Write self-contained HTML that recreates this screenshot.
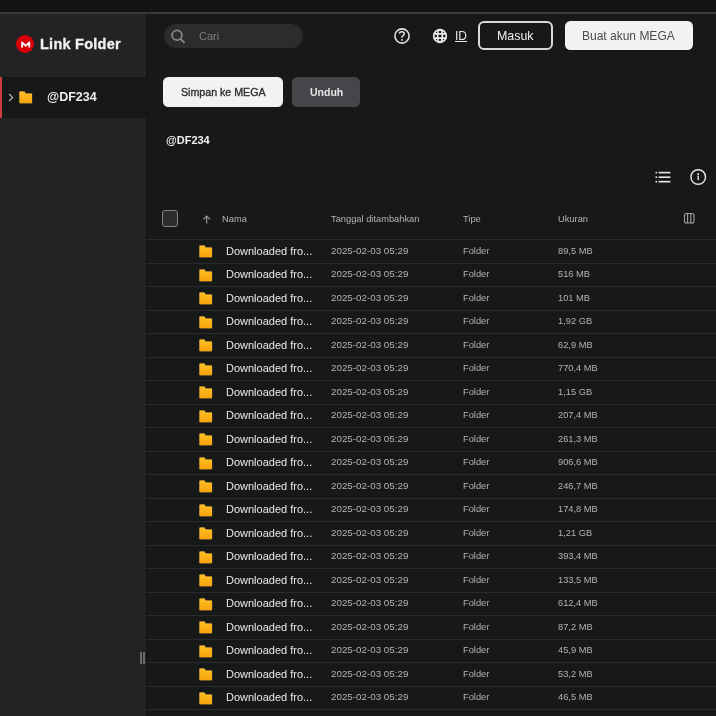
<!DOCTYPE html>
<html><head><meta charset="utf-8"><style>
*{margin:0;padding:0;box-sizing:border-box}
html,body{-webkit-font-smoothing:antialiased;width:716px;height:716px;overflow:hidden;background:#171818;font-family:"Liberation Sans",sans-serif}
.abs{position:absolute}
.abs,.row span{will-change:transform}
#top{position:absolute;left:0;top:0;width:716px;height:12px;background:#141414}
#topline{position:absolute;left:0;top:12px;width:716px;height:2px;background:#38393a}
#side{position:absolute;left:0;top:14px;width:146px;height:702px;background:#222325}
#main{position:absolute;left:146px;top:14px;width:570px;height:702px;background:#171818}
.row{position:absolute;left:146px;width:570px;height:23.5px;border-top:1px solid #2a2b2c}
.row .fd{position:absolute;left:53px;top:5px;width:14px;height:13px}
svg{display:block}
.row span{position:absolute;top:5px;white-space:nowrap;line-height:14px}
.nm{top:3.5px!important;left:80px;font-size:11px;color:#e9e9e9}
.dt{top:3.6px!important;left:184.5px;font-size:9.8px;color:#b2b3b5}
.tp{top:3.6px!important;left:316.5px;font-size:9.3px;color:#b2b3b5}
.sz{top:3.6px!important;left:412px;font-size:9.3px;color:#b2b3b5}
</style></head><body>
<svg width="0" height="0" style="position:absolute"><defs><linearGradient id="fg" x1="0" y1="0" x2="0" y2="1"><stop offset="0" stop-color="#fdc125"/><stop offset="1" stop-color="#f6a20b"/></linearGradient></defs></svg>
<div id="top"></div><div id="topline"></div>
<div id="side"></div>
<div id="main"></div>
<div class="abs" style="left:146px;top:14px;width:1.5px;height:702px;background:#141516"></div>
<!-- logo -->
<div class="abs" style="left:16.3px;top:35.2px;width:18px;height:18px;border-radius:50%;background:#d90007"></div>
<svg class="abs" style="left:20.5px;top:40.5px" width="10" height="7" viewBox="0 0 10 7"><path d="M1.1 6.6 V1.4 L4.7 4.9 L8.3 1.4 V6.6" fill="none" stroke="#fff" stroke-width="1.8" stroke-linejoin="round"/></svg>
<div class="abs" style="left:40px;top:36px;font-size:14.5px;font-weight:700;-webkit-text-stroke:0.3px #f2f2f2;color:#f2f2f2;letter-spacing:0.25px;line-height:16px">Link Folder</div>
<!-- selected item -->
<div class="abs" style="left:0;top:77px;width:146px;height:40.5px;background:#171818"></div>
<div class="abs" style="left:0;top:77px;width:2.4px;height:40.5px;background:#d0393e"></div>
<svg class="abs" style="left:8px;top:93px" width="6" height="9" viewBox="0 0 6 9"><path d="M1.2 1 L4.6 4.5 L1.2 8" fill="none" stroke="#bdbdbd" stroke-width="1.1"/></svg>
<div class="abs" style="left:18.7px;top:91.3px;width:14px;height:13px"><svg width="14" height="13" viewBox="0 0 14 13"><path d="M1.1 0.5 H5.5 L6.6 2.5 H12.3 Q13 2.5 13 3.2 V11.6 Q13 12.3 12.3 12.3 H1.1 Q0.4 12.3 0.4 11.6 V1.2 Q0.4 0.5 1.1 0.5 Z" fill="url(#fg)" stroke="#ffd46e" stroke-opacity="0.45" stroke-width="0.5"/></svg></div>
<div class="abs" style="left:47.3px;top:89.8px;font-size:12.5px;font-weight:700;color:#eeeeee;line-height:15px">@DF234</div>
<!-- resize handle -->
<div class="abs" style="left:139.8px;top:652px;width:2px;height:12px;background:#6a6b6d"></div>
<div class="abs" style="left:142.9px;top:652px;width:2px;height:12px;background:#6a6b6d"></div>
<!-- search -->
<div class="abs" style="left:163.5px;top:24px;width:138.5px;height:23.5px;border-radius:12px;background:#2b2c2e"></div>
<svg class="abs" style="left:170px;top:28.5px" width="16" height="15" viewBox="0 0 16 15"><circle cx="7" cy="6.2" r="4.9" fill="none" stroke="#8a8b8d" stroke-width="1.7"/><path d="M10.5 9.8 L14 13.3" stroke="#8a8b8d" stroke-width="1.8" stroke-linecap="round"/></svg>
<div class="abs" style="left:198.5px;top:30px;font-size:11px;color:#7b7c7e;line-height:13px">Cari</div>
<!-- help -->
<svg class="abs" style="left:394px;top:28px" width="16" height="16" viewBox="0 0 16 16"><circle cx="8" cy="8" r="7.1" fill="none" stroke="#e2e2e2" stroke-width="1.6"/><path d="M5.5 5.8 Q5.5 3.7 7.9 3.7 Q10.3 3.7 10.3 5.7 Q10.3 6.9 9 7.6 Q7.9 8.2 7.9 9.7" fill="none" stroke="#e2e2e2" stroke-width="1.5"/><rect x="7" y="11.1" width="1.8" height="1.7" fill="#cfcfcf"/></svg>
<!-- globe -->
<svg class="abs" style="left:432px;top:27.5px" width="16" height="16" viewBox="0 0 16 16"><g fill="none" stroke="#ececec" stroke-width="1.7"><circle cx="8" cy="8" r="6.3"/><ellipse cx="8" cy="8" rx="2.4" ry="6.3"/><path d="M1.7 5.8 H14.3 M1.7 10.2 H14.3"/></g></svg>
<div class="abs" style="left:455px;top:29.5px;font-size:12px;color:#e6e6e6;line-height:13px;text-decoration:underline">ID</div>
<!-- masuk -->
<div class="abs" style="left:478.4px;top:21.1px;width:74.5px;height:29.3px;border:2px solid #d9d9d9;border-radius:6px;"></div>
<div class="abs" style="left:497px;top:28.5px;font-size:12.4px;color:#f0f0f0;line-height:14px">Masuk</div>
<!-- buat akun -->
<div class="abs" style="left:564.5px;top:21.2px;width:128px;height:29.3px;border-radius:5.5px;background:#f2f2f2"></div>
<div class="abs" style="left:582px;top:28.5px;font-size:12px;color:#4b4b4d;line-height:14px">Buat akun MEGA</div>
<!-- simpan -->
<div class="abs" style="left:163.3px;top:77.2px;width:120px;height:29.6px;border-radius:5.5px;background:#f2f2f2"></div>
<div class="abs" style="left:181.3px;top:86.1px;font-size:10.65px;font-weight:400;-webkit-text-stroke:0.35px #2e2f31;color:#2e2f31;line-height:13px">Simpan ke MEGA</div>
<div class="abs" style="left:292px;top:77.2px;width:68.3px;height:29.6px;border-radius:5.5px;background:#45464a"></div>
<div class="abs" style="left:309.7px;top:86px;font-size:10.5px;font-weight:700;color:#e6e6e6;line-height:13px">Unduh</div>
<!-- title -->
<div class="abs" style="left:166px;top:133.8px;font-size:11px;font-weight:700;color:#f0f0f0;line-height:13px">@DF234</div>
<!-- list icon -->
<svg class="abs" style="left:654px;top:169px" width="18" height="16" viewBox="0 0 18 16"><g fill="#e8e8e8"><rect x="1.5" y="2.8" width="1.6" height="1.6"/><rect x="1.5" y="7.4" width="1.6" height="1.6"/><rect x="1.5" y="11.9" width="1.6" height="1.6"/><rect x="4.6" y="2.8" width="11.8" height="1.6"/><rect x="4.6" y="7.4" width="11.8" height="1.6"/><rect x="4.6" y="11.9" width="11.8" height="1.6"/></g></svg>
<!-- info icon -->
<svg class="abs" style="left:689px;top:168.3px" width="18" height="18" viewBox="0 0 18 18"><circle cx="9.2" cy="9" r="7.3" fill="none" stroke="#e8e8e8" stroke-width="1.4"/><circle cx="9.2" cy="6" r="0.9" fill="#e8e8e8"/><rect x="8.5" y="7.6" width="1.4" height="4.6" fill="#e8e8e8"/></svg>
<!-- header -->
<div class="abs" style="left:162px;top:210px;width:16.3px;height:16.6px;border:1.4px solid #848587;border-radius:3px;background:#2c2d2f"></div>
<svg class="abs" style="left:202px;top:214.5px" width="10" height="9" viewBox="0 0 10 9"><path d="M4.7 8.5 V1.2 M1.5 4.3 L4.7 1 L7.9 4.3" fill="none" stroke="#9a9b9d" stroke-width="1.1"/></svg>
<div class="abs hd" style="left:221.5px;top:213.4px;font-size:9.3px;color:#b2b3b5;line-height:12px">Nama</div>
<div class="abs hd" style="left:330.5px;top:212.8px;font-size:9.3px;color:#b2b3b5;line-height:12px">Tanggal ditambahkan</div>
<div class="abs hd" style="left:462.5px;top:212.8px;font-size:9.3px;color:#b2b3b5;line-height:12px">Tipe</div>
<div class="abs hd" style="left:558px;top:212.8px;font-size:9.3px;color:#b2b3b5;line-height:12px">Ukuran</div>
<svg class="abs" style="left:683px;top:212px" width="12" height="12" viewBox="0 0 12 12"><g fill="none" stroke="#a0a1a3" stroke-width="1.1"><rect x="1.5" y="1.5" width="9.5" height="9.5" rx="2"/><path d="M4.6 1.5 V11 M7.8 1.5 V11"/></g></svg>
<div class="row" style="top:239.0px"><i class="fd"><svg width="14" height="13" viewBox="0 0 14 13"><path d="M1.1 0.5 H5.5 L6.6 2.5 H12.3 Q13 2.5 13 3.2 V11.6 Q13 12.3 12.3 12.3 H1.1 Q0.4 12.3 0.4 11.6 V1.2 Q0.4 0.5 1.1 0.5 Z" fill="url(#fg)" stroke="#ffd46e" stroke-opacity="0.45" stroke-width="0.5"/></svg></i><span class="nm">Downloaded fro...</span><span class="dt">2025-02-03 05:29</span><span class="tp">Folder</span><span class="sz">89,5 MB</span></div>
<div class="row" style="top:262.5px"><i class="fd"><svg width="14" height="13" viewBox="0 0 14 13"><path d="M1.1 0.5 H5.5 L6.6 2.5 H12.3 Q13 2.5 13 3.2 V11.6 Q13 12.3 12.3 12.3 H1.1 Q0.4 12.3 0.4 11.6 V1.2 Q0.4 0.5 1.1 0.5 Z" fill="url(#fg)" stroke="#ffd46e" stroke-opacity="0.45" stroke-width="0.5"/></svg></i><span class="nm">Downloaded fro...</span><span class="dt">2025-02-03 05:29</span><span class="tp">Folder</span><span class="sz">516 MB</span></div>
<div class="row" style="top:286.0px"><i class="fd"><svg width="14" height="13" viewBox="0 0 14 13"><path d="M1.1 0.5 H5.5 L6.6 2.5 H12.3 Q13 2.5 13 3.2 V11.6 Q13 12.3 12.3 12.3 H1.1 Q0.4 12.3 0.4 11.6 V1.2 Q0.4 0.5 1.1 0.5 Z" fill="url(#fg)" stroke="#ffd46e" stroke-opacity="0.45" stroke-width="0.5"/></svg></i><span class="nm">Downloaded fro...</span><span class="dt">2025-02-03 05:29</span><span class="tp">Folder</span><span class="sz">101 MB</span></div>
<div class="row" style="top:309.5px"><i class="fd"><svg width="14" height="13" viewBox="0 0 14 13"><path d="M1.1 0.5 H5.5 L6.6 2.5 H12.3 Q13 2.5 13 3.2 V11.6 Q13 12.3 12.3 12.3 H1.1 Q0.4 12.3 0.4 11.6 V1.2 Q0.4 0.5 1.1 0.5 Z" fill="url(#fg)" stroke="#ffd46e" stroke-opacity="0.45" stroke-width="0.5"/></svg></i><span class="nm">Downloaded fro...</span><span class="dt">2025-02-03 05:29</span><span class="tp">Folder</span><span class="sz">1,92 GB</span></div>
<div class="row" style="top:333.0px"><i class="fd"><svg width="14" height="13" viewBox="0 0 14 13"><path d="M1.1 0.5 H5.5 L6.6 2.5 H12.3 Q13 2.5 13 3.2 V11.6 Q13 12.3 12.3 12.3 H1.1 Q0.4 12.3 0.4 11.6 V1.2 Q0.4 0.5 1.1 0.5 Z" fill="url(#fg)" stroke="#ffd46e" stroke-opacity="0.45" stroke-width="0.5"/></svg></i><span class="nm">Downloaded fro...</span><span class="dt">2025-02-03 05:29</span><span class="tp">Folder</span><span class="sz">62,9 MB</span></div>
<div class="row" style="top:356.5px"><i class="fd"><svg width="14" height="13" viewBox="0 0 14 13"><path d="M1.1 0.5 H5.5 L6.6 2.5 H12.3 Q13 2.5 13 3.2 V11.6 Q13 12.3 12.3 12.3 H1.1 Q0.4 12.3 0.4 11.6 V1.2 Q0.4 0.5 1.1 0.5 Z" fill="url(#fg)" stroke="#ffd46e" stroke-opacity="0.45" stroke-width="0.5"/></svg></i><span class="nm">Downloaded fro...</span><span class="dt">2025-02-03 05:29</span><span class="tp">Folder</span><span class="sz">770,4 MB</span></div>
<div class="row" style="top:380.0px"><i class="fd"><svg width="14" height="13" viewBox="0 0 14 13"><path d="M1.1 0.5 H5.5 L6.6 2.5 H12.3 Q13 2.5 13 3.2 V11.6 Q13 12.3 12.3 12.3 H1.1 Q0.4 12.3 0.4 11.6 V1.2 Q0.4 0.5 1.1 0.5 Z" fill="url(#fg)" stroke="#ffd46e" stroke-opacity="0.45" stroke-width="0.5"/></svg></i><span class="nm">Downloaded fro...</span><span class="dt">2025-02-03 05:29</span><span class="tp">Folder</span><span class="sz">1,15 GB</span></div>
<div class="row" style="top:403.5px"><i class="fd"><svg width="14" height="13" viewBox="0 0 14 13"><path d="M1.1 0.5 H5.5 L6.6 2.5 H12.3 Q13 2.5 13 3.2 V11.6 Q13 12.3 12.3 12.3 H1.1 Q0.4 12.3 0.4 11.6 V1.2 Q0.4 0.5 1.1 0.5 Z" fill="url(#fg)" stroke="#ffd46e" stroke-opacity="0.45" stroke-width="0.5"/></svg></i><span class="nm">Downloaded fro...</span><span class="dt">2025-02-03 05:29</span><span class="tp">Folder</span><span class="sz">207,4 MB</span></div>
<div class="row" style="top:427.0px"><i class="fd"><svg width="14" height="13" viewBox="0 0 14 13"><path d="M1.1 0.5 H5.5 L6.6 2.5 H12.3 Q13 2.5 13 3.2 V11.6 Q13 12.3 12.3 12.3 H1.1 Q0.4 12.3 0.4 11.6 V1.2 Q0.4 0.5 1.1 0.5 Z" fill="url(#fg)" stroke="#ffd46e" stroke-opacity="0.45" stroke-width="0.5"/></svg></i><span class="nm">Downloaded fro...</span><span class="dt">2025-02-03 05:29</span><span class="tp">Folder</span><span class="sz">261,3 MB</span></div>
<div class="row" style="top:450.5px"><i class="fd"><svg width="14" height="13" viewBox="0 0 14 13"><path d="M1.1 0.5 H5.5 L6.6 2.5 H12.3 Q13 2.5 13 3.2 V11.6 Q13 12.3 12.3 12.3 H1.1 Q0.4 12.3 0.4 11.6 V1.2 Q0.4 0.5 1.1 0.5 Z" fill="url(#fg)" stroke="#ffd46e" stroke-opacity="0.45" stroke-width="0.5"/></svg></i><span class="nm">Downloaded fro...</span><span class="dt">2025-02-03 05:29</span><span class="tp">Folder</span><span class="sz">906,6 MB</span></div>
<div class="row" style="top:474.0px"><i class="fd"><svg width="14" height="13" viewBox="0 0 14 13"><path d="M1.1 0.5 H5.5 L6.6 2.5 H12.3 Q13 2.5 13 3.2 V11.6 Q13 12.3 12.3 12.3 H1.1 Q0.4 12.3 0.4 11.6 V1.2 Q0.4 0.5 1.1 0.5 Z" fill="url(#fg)" stroke="#ffd46e" stroke-opacity="0.45" stroke-width="0.5"/></svg></i><span class="nm">Downloaded fro...</span><span class="dt">2025-02-03 05:29</span><span class="tp">Folder</span><span class="sz">246,7 MB</span></div>
<div class="row" style="top:497.5px"><i class="fd"><svg width="14" height="13" viewBox="0 0 14 13"><path d="M1.1 0.5 H5.5 L6.6 2.5 H12.3 Q13 2.5 13 3.2 V11.6 Q13 12.3 12.3 12.3 H1.1 Q0.4 12.3 0.4 11.6 V1.2 Q0.4 0.5 1.1 0.5 Z" fill="url(#fg)" stroke="#ffd46e" stroke-opacity="0.45" stroke-width="0.5"/></svg></i><span class="nm">Downloaded fro...</span><span class="dt">2025-02-03 05:29</span><span class="tp">Folder</span><span class="sz">174,8 MB</span></div>
<div class="row" style="top:521.0px"><i class="fd"><svg width="14" height="13" viewBox="0 0 14 13"><path d="M1.1 0.5 H5.5 L6.6 2.5 H12.3 Q13 2.5 13 3.2 V11.6 Q13 12.3 12.3 12.3 H1.1 Q0.4 12.3 0.4 11.6 V1.2 Q0.4 0.5 1.1 0.5 Z" fill="url(#fg)" stroke="#ffd46e" stroke-opacity="0.45" stroke-width="0.5"/></svg></i><span class="nm">Downloaded fro...</span><span class="dt">2025-02-03 05:29</span><span class="tp">Folder</span><span class="sz">1,21 GB</span></div>
<div class="row" style="top:544.5px"><i class="fd"><svg width="14" height="13" viewBox="0 0 14 13"><path d="M1.1 0.5 H5.5 L6.6 2.5 H12.3 Q13 2.5 13 3.2 V11.6 Q13 12.3 12.3 12.3 H1.1 Q0.4 12.3 0.4 11.6 V1.2 Q0.4 0.5 1.1 0.5 Z" fill="url(#fg)" stroke="#ffd46e" stroke-opacity="0.45" stroke-width="0.5"/></svg></i><span class="nm">Downloaded fro...</span><span class="dt">2025-02-03 05:29</span><span class="tp">Folder</span><span class="sz">393,4 MB</span></div>
<div class="row" style="top:568.0px"><i class="fd"><svg width="14" height="13" viewBox="0 0 14 13"><path d="M1.1 0.5 H5.5 L6.6 2.5 H12.3 Q13 2.5 13 3.2 V11.6 Q13 12.3 12.3 12.3 H1.1 Q0.4 12.3 0.4 11.6 V1.2 Q0.4 0.5 1.1 0.5 Z" fill="url(#fg)" stroke="#ffd46e" stroke-opacity="0.45" stroke-width="0.5"/></svg></i><span class="nm">Downloaded fro...</span><span class="dt">2025-02-03 05:29</span><span class="tp">Folder</span><span class="sz">133,5 MB</span></div>
<div class="row" style="top:591.5px"><i class="fd"><svg width="14" height="13" viewBox="0 0 14 13"><path d="M1.1 0.5 H5.5 L6.6 2.5 H12.3 Q13 2.5 13 3.2 V11.6 Q13 12.3 12.3 12.3 H1.1 Q0.4 12.3 0.4 11.6 V1.2 Q0.4 0.5 1.1 0.5 Z" fill="url(#fg)" stroke="#ffd46e" stroke-opacity="0.45" stroke-width="0.5"/></svg></i><span class="nm">Downloaded fro...</span><span class="dt">2025-02-03 05:29</span><span class="tp">Folder</span><span class="sz">612,4 MB</span></div>
<div class="row" style="top:615.0px"><i class="fd"><svg width="14" height="13" viewBox="0 0 14 13"><path d="M1.1 0.5 H5.5 L6.6 2.5 H12.3 Q13 2.5 13 3.2 V11.6 Q13 12.3 12.3 12.3 H1.1 Q0.4 12.3 0.4 11.6 V1.2 Q0.4 0.5 1.1 0.5 Z" fill="url(#fg)" stroke="#ffd46e" stroke-opacity="0.45" stroke-width="0.5"/></svg></i><span class="nm">Downloaded fro...</span><span class="dt">2025-02-03 05:29</span><span class="tp">Folder</span><span class="sz">87,2 MB</span></div>
<div class="row" style="top:638.5px"><i class="fd"><svg width="14" height="13" viewBox="0 0 14 13"><path d="M1.1 0.5 H5.5 L6.6 2.5 H12.3 Q13 2.5 13 3.2 V11.6 Q13 12.3 12.3 12.3 H1.1 Q0.4 12.3 0.4 11.6 V1.2 Q0.4 0.5 1.1 0.5 Z" fill="url(#fg)" stroke="#ffd46e" stroke-opacity="0.45" stroke-width="0.5"/></svg></i><span class="nm">Downloaded fro...</span><span class="dt">2025-02-03 05:29</span><span class="tp">Folder</span><span class="sz">45,9 MB</span></div>
<div class="row" style="top:662.0px"><i class="fd"><svg width="14" height="13" viewBox="0 0 14 13"><path d="M1.1 0.5 H5.5 L6.6 2.5 H12.3 Q13 2.5 13 3.2 V11.6 Q13 12.3 12.3 12.3 H1.1 Q0.4 12.3 0.4 11.6 V1.2 Q0.4 0.5 1.1 0.5 Z" fill="url(#fg)" stroke="#ffd46e" stroke-opacity="0.45" stroke-width="0.5"/></svg></i><span class="nm">Downloaded fro...</span><span class="dt">2025-02-03 05:29</span><span class="tp">Folder</span><span class="sz">53,2 MB</span></div>
<div class="row" style="top:685.5px"><i class="fd"><svg width="14" height="13" viewBox="0 0 14 13"><path d="M1.1 0.5 H5.5 L6.6 2.5 H12.3 Q13 2.5 13 3.2 V11.6 Q13 12.3 12.3 12.3 H1.1 Q0.4 12.3 0.4 11.6 V1.2 Q0.4 0.5 1.1 0.5 Z" fill="url(#fg)" stroke="#ffd46e" stroke-opacity="0.45" stroke-width="0.5"/></svg></i><span class="nm">Downloaded fro...</span><span class="dt">2025-02-03 05:29</span><span class="tp">Folder</span><span class="sz">46,5 MB</span></div>
<div class="abs" style="left:146px;top:709px;width:570px;height:1px;background:#2a2b2c"></div>
</body></html>
